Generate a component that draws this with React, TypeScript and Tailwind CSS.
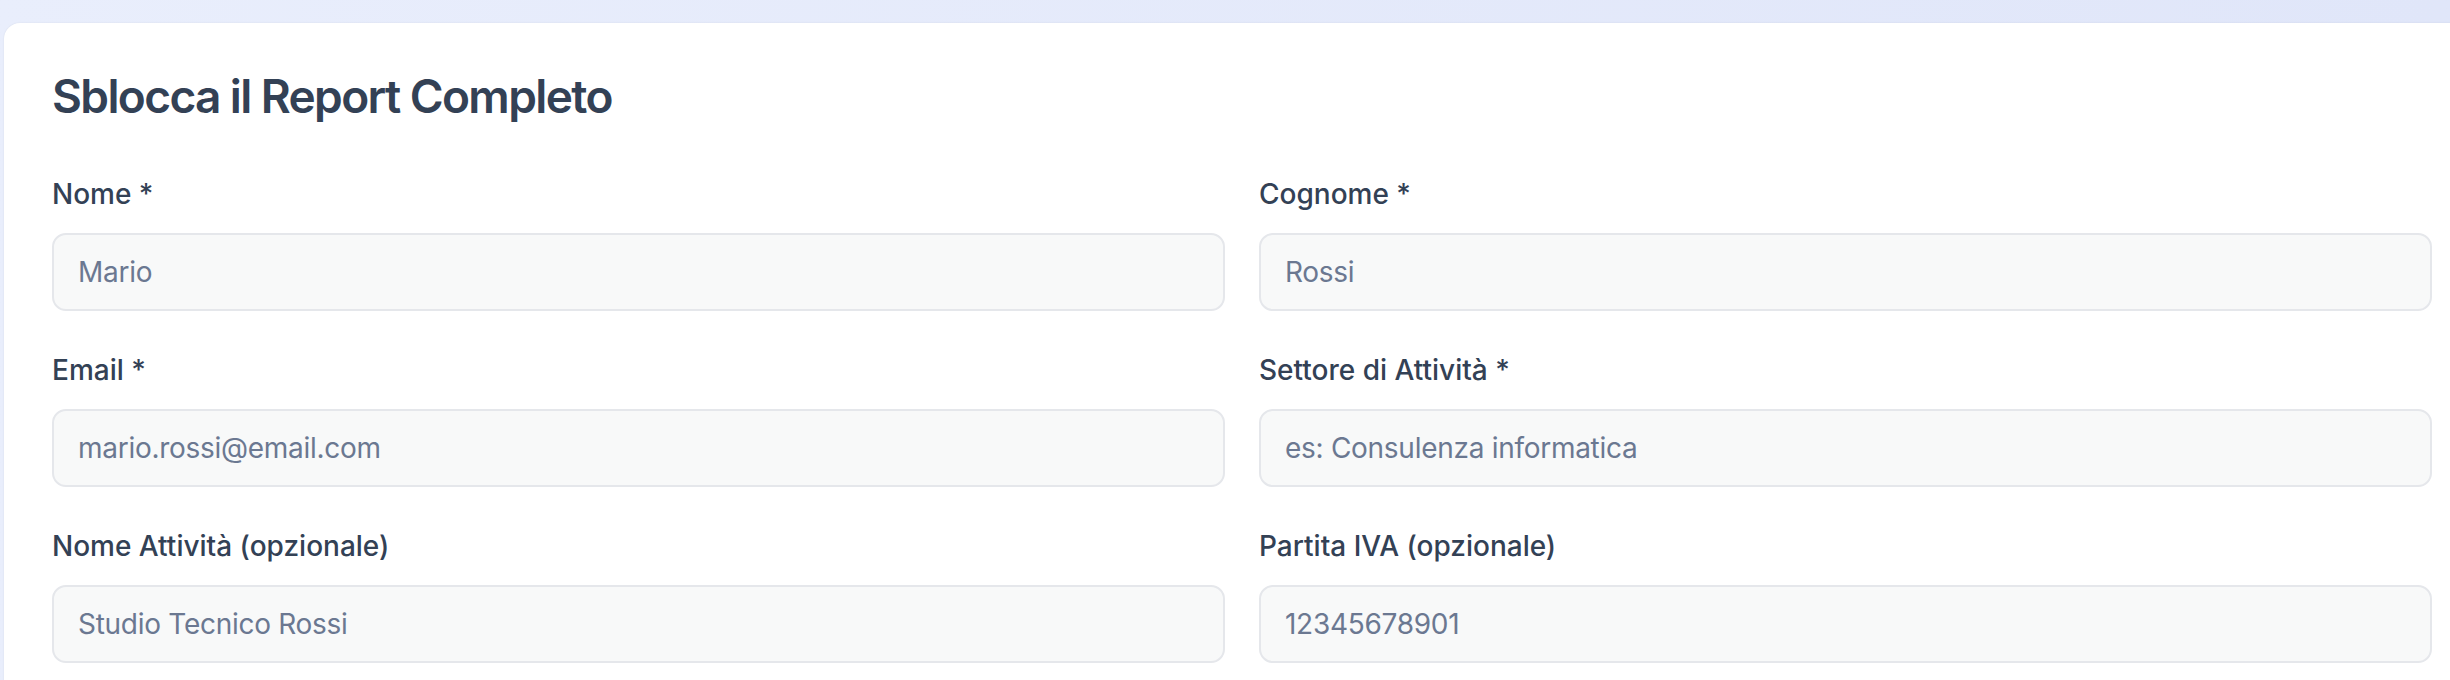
const fields = [
  { label: "Nome *", placeholder: "Mario" },
  { label: "Cognome *", placeholder: "Rossi" },
  { label: "Email *", placeholder: "mario.rossi@email.com" },
  { label: "Settore di Attività *", placeholder: "es: Consulenza informatica" },
  { label: "Nome Attività (opzionale)", placeholder: "Studio Tecnico Rossi" },
  { label: "Partita IVA (opzionale)", placeholder: "12345678901" },
];

export default function App() {
  return (
    <div
      className="h-[680px] w-full overflow-hidden bg-gradient-to-r from-[#e9eefc] to-[#e0e6f9] pt-[23px] pl-[4px]"
      style={{ fontFamily: "Inter, 'Noto Sans', sans-serif" }}
    >
      {/* Card */}
      <div className="w-[2476px] rounded-[16px] bg-white pl-[48px] pr-[48px] pt-[45px] pb-[48px] shadow-[0_0_2px_rgba(15,23,42,0.08)]">
        <h2 className="text-[46px] leading-[56px] font-semibold tracking-[-0.035em] text-[#334155]">
          Sblocca il Report Completo
        </h2>

        <form className="mt-[50px] grid grid-cols-2 gap-x-[34px] gap-y-[39px]">
          {fields.map((f) => (
            <div key={f.label} className="flex flex-col">
              <label className="text-[28px] leading-[40px] font-medium text-[#334155]">
                {f.label}
              </label>
              <input
                type="text"
                placeholder={f.placeholder}
                className="mt-[19px] h-[78px] w-full rounded-[14px] border-2 border-[#e5e7eb] bg-[#f8f9f9] pl-[24px] text-[28px] tracking-[-0.01em] text-[#334155] placeholder:text-[#6b7891] outline-none"
              />
            </div>
          ))}
        </form>
      </div>
    </div>
  );
}
